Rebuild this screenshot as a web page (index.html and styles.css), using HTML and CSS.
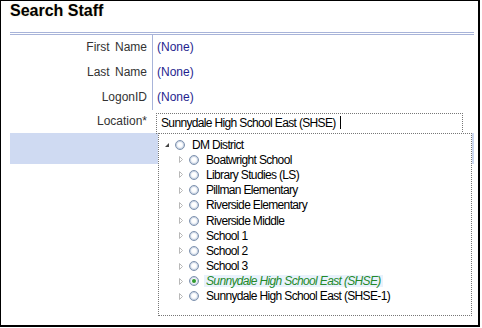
FILE: index.html
```html
<!DOCTYPE html>
<html lang="en">
<head>
  <meta charset="UTF-8" />
  <title>Search Staff</title>
  <link rel="stylesheet" href="styles.css">
</head>
<body>
  <div class="panel">
    <h1 class="title">Search Staff</h1>

    <div class="form">
      <div class="rule"></div>

      <div class="row">
        <div class="label">First Name</div>
        <div class="value">(None)</div>
      </div>
      <div class="row">
        <div class="label">Last Name</div>
        <div class="value">(None)</div>
      </div>
      <div class="row">
        <div class="label">LogonID</div>
        <div class="value">(None)</div>
      </div>
      <div class="row row-location">
        <div class="label">Location*</div>
        <div class="field">
          <div class="input">Sunnydale High School East (SHSE)<span class="caret"></span></div>
        </div>
      </div>

      <div class="band"></div>
    </div>

    <!-- lista desplegable del arbol de ubicaciones -->
    <div class="dropdown">
      <div class="node root">
        <svg class="toggle" width="11" height="15" viewBox="0 0 11 15"><path d="M1 10 L5 6 L5 10 Z" fill="#444"/></svg>
        <span class="radio"></span>
        <span class="text">DM District</span>
      </div>
      <div class="node child">
        <svg class="toggle" width="11" height="15" viewBox="0 0 11 15"><path d="M1.5 4.5 L4.5 7.5 L1.5 10.5 Z" fill="none" stroke="#b8b8b8"/></svg>
        <span class="radio"></span>
        <span class="text">Boatwright School</span>
      </div>
      <div class="node child">
        <svg class="toggle" width="11" height="15" viewBox="0 0 11 15"><path d="M1.5 4.5 L4.5 7.5 L1.5 10.5 Z" fill="none" stroke="#b8b8b8"/></svg>
        <span class="radio"></span>
        <span class="text">Library Studies (LS)</span>
      </div>
      <div class="node child">
        <svg class="toggle" width="11" height="15" viewBox="0 0 11 15"><path d="M1.5 4.5 L4.5 7.5 L1.5 10.5 Z" fill="none" stroke="#b8b8b8"/></svg>
        <span class="radio"></span>
        <span class="text">Pillman Elementary</span>
      </div>
      <div class="node child">
        <svg class="toggle" width="11" height="15" viewBox="0 0 11 15"><path d="M1.5 4.5 L4.5 7.5 L1.5 10.5 Z" fill="none" stroke="#b8b8b8"/></svg>
        <span class="radio"></span>
        <span class="text">Riverside Elementary</span>
      </div>
      <div class="node child">
        <svg class="toggle" width="11" height="15" viewBox="0 0 11 15"><path d="M1.5 4.5 L4.5 7.5 L1.5 10.5 Z" fill="none" stroke="#b8b8b8"/></svg>
        <span class="radio"></span>
        <span class="text">Riverside Middle</span>
      </div>
      <div class="node child">
        <svg class="toggle" width="11" height="15" viewBox="0 0 11 15"><path d="M1.5 4.5 L4.5 7.5 L1.5 10.5 Z" fill="none" stroke="#b8b8b8"/></svg>
        <span class="radio"></span>
        <span class="text">School 1</span>
      </div>
      <div class="node child">
        <svg class="toggle" width="11" height="15" viewBox="0 0 11 15"><path d="M1.5 4.5 L4.5 7.5 L1.5 10.5 Z" fill="none" stroke="#b8b8b8"/></svg>
        <span class="radio"></span>
        <span class="text">School 2</span>
      </div>
      <div class="node child">
        <svg class="toggle" width="11" height="15" viewBox="0 0 11 15"><path d="M1.5 4.5 L4.5 7.5 L1.5 10.5 Z" fill="none" stroke="#b8b8b8"/></svg>
        <span class="radio"></span>
        <span class="text">School 3</span>
      </div>
      <div class="node child selected">
        <svg class="toggle" width="11" height="15" viewBox="0 0 11 15"><path d="M1.5 4.5 L4.5 7.5 L1.5 10.5 Z" fill="none" stroke="#b8b8b8"/></svg>
        <span class="radio checked"></span>
        <span class="text">Sunnydale High School East (SHSE)</span>
      </div>
      <div class="node child">
        <svg class="toggle" width="11" height="15" viewBox="0 0 11 15"><path d="M1.5 4.5 L4.5 7.5 L1.5 10.5 Z" fill="none" stroke="#b8b8b8"/></svg>
        <span class="radio"></span>
        <span class="text">Sunnydale High School East (SHSE-1)</span>
      </div>
    </div>
  </div>
</body>
</html>
```

FILE: styles.css
```css
body {
  margin: 0;
  padding: 0;
  font-family: "Liberation Sans", Arial, sans-serif;
  background-color: #fff;
}

.panel {
  position: relative;
  width: 480px;
  height: 327px;
  box-sizing: border-box;
  border-top: 1px solid #000;
  border-left: 1px solid #000;
  border-right: 2px solid #000;
  border-bottom: 2px solid #000;
  background-color: #fff;
}

.title {
  margin: 0 0 12px 9px;
  padding-top: 1px;
  font-size: 16px;
  line-height: 18px;
  font-weight: bold;
  color: #000;
  text-shadow: 0 0 2px rgba(200, 160, 60, 0.35);
}

.form {
  margin: 0 4px 0 9px;
}

.rule {
  height: 1px;
  border-top: 1px solid #a8b4d9;
  border-bottom: 1px solid #a8b4d9;
}

.row {
  display: flex;
  height: 25px;
  font-size: 12px;
  line-height: 25px;
}

.label {
  width: 137px;
  padding-right: 5px;
  text-align: right;
  color: #333;
  word-spacing: 2px;
  border-right: 1px solid #a8b4d9;
}

.value {
  padding-left: 4px;
  color: #1f1f8f;
}

.row-location {
  height: 23px;
  line-height: 23px;
}

.row-location .label {
  border-right: 1px solid transparent;
}

.field {
  padding-top: 3px;
  padding-left: 3px;
}

.input {
  width: 301px;
  height: 19px;
  padding-left: 4px;
  border: 1px dotted #777;
  font-size: 12px;
  line-height: 19px;
  letter-spacing: -0.65px;
  color: #000;
}

.caret {
  display: inline-block;
  width: 0;
  height: 13px;
  margin-left: 4px;
  border-left: 1px solid #000;
  vertical-align: -2px;
}

.band {
  height: 31px;
  background-color: #cfdaf2;
}

.dropdown {
  position: absolute;
  left: 157px;
  top: 132px;
  width: 312px;
  height: 178px;
  padding-top: 3px;
  box-sizing: content-box;
  border: 1px dotted #777;
  background-color: #fff;
  font-size: 12px;
  letter-spacing: -0.65px;
}

.node {
  display: flex;
  align-items: center;
  height: 15.2px;
  color: #000;
}

.node.root {
  padding-left: 5px;
}

.node.child {
  padding-left: 19px;
}

.toggle {
  flex: none;
}

.radio {
  flex: none;
  position: relative;
  width: 8px;
  height: 8px;
  margin-right: 7px;
  border: 1px solid #7d91ae;
  border-radius: 50%;
  background: radial-gradient(circle at 50% 45%, #ffffff 25%, #d8e0ec 100%);
  box-shadow: inset 0 0 0 1px rgba(170, 185, 210, 0.55);
}

.radio.checked::after {
  content: "";
  position: absolute;
  left: 2px;
  top: 2px;
  width: 4px;
  height: 4px;
  border-radius: 50%;
  background-color: #2e9a2e;
}

.text {
  line-height: 12px;
  white-space: nowrap;
}

.selected .text {
  margin-left: -2px;
  padding: 0 2px;
  background-color: #e9f2fc;
  color: #23892a;
  font-style: italic;
}
```
